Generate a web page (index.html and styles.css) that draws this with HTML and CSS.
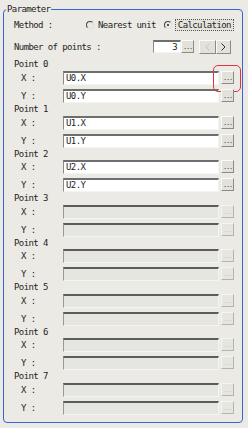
FILE: index.html
```html
<!DOCTYPE html>
<html lang="en">
<head>
  <meta charset="UTF-8" />
  <meta name="viewport" content="width=device-width, initial-scale=1.0"/>
  <title>Parameter</title>
  <link rel="stylesheet" href="styles.css">
</head>
<body>
  <fieldset class="panel">
    <legend>Parameter</legend>

    <!-- Method -->
    <div class="row method">
      <span class="label">Method :</span>
      <span class="radio"><span class="dot"></span>Nearest unit</span>
      <span class="radio on"><span class="dot"></span><span class="focus">Calculation</span></span>
    </div>

    <!-- Number of points -->
    <div class="row count">
      <span class="label">Number of points :</span>
      <span class="field num">3</span><span class="btn dots">...</span>
      <span class="btn arrow prev off">
        <svg width="5" height="8" viewBox="0 0 5 8"><path d="M4.5 0.5 L1 4 L4.5 7.5" fill="none" stroke="#c4c4bc" stroke-width="1"/></svg>
      </span><span class="btn arrow next">
        <svg width="5" height="8" viewBox="0 0 5 8"><path d="M0.5 0.5 L4 4 L0.5 7.5" fill="none" stroke="#333" stroke-width="1"/></svg>
      </span>
    </div>

    <!-- Point 0 -->
    <div class="point first">
      <div class="head">Point 0</div>
      <div class="row coord">
        <span class="axis">X :</span><span class="field">U0.X</span>
        <span class="btn dots">...<span class="mark"></span></span>
      </div>
      <div class="row coord">
        <span class="axis">Y :</span><span class="field">U0.Y</span><span class="btn dots">...</span>
      </div>
    </div>

    <!-- Point 1 -->
    <div class="point">
      <div class="head">Point 1</div>
      <div class="row coord">
        <span class="axis">X :</span><span class="field">U1.X</span><span class="btn dots">...</span>
      </div>
      <div class="row coord">
        <span class="axis">Y :</span><span class="field">U1.Y</span><span class="btn dots">...</span>
      </div>
    </div>

    <!-- Point 2 -->
    <div class="point tight">
      <div class="head">Point 2</div>
      <div class="row coord">
        <span class="axis">X :</span><span class="field">U2.X</span><span class="btn dots">...</span>
      </div>
      <div class="row coord">
        <span class="axis">Y :</span><span class="field">U2.Y</span><span class="btn dots">...</span>
      </div>
    </div>

    <!-- Point 3 - 7 (not used) -->
    <div class="point off">
      <div class="head">Point 3</div>
      <div class="row coord"><span class="axis">X :</span><span class="field"></span><span class="btn dots">...</span></div>
      <div class="row coord"><span class="axis">Y :</span><span class="field"></span><span class="btn dots">...</span></div>
    </div>
    <div class="point off tight">
      <div class="head">Point 4</div>
      <div class="row coord"><span class="axis">X :</span><span class="field"></span><span class="btn dots">...</span></div>
      <div class="row coord"><span class="axis">Y :</span><span class="field"></span><span class="btn dots">...</span></div>
    </div>
    <div class="point off">
      <div class="head">Point 5</div>
      <div class="row coord"><span class="axis">X :</span><span class="field"></span><span class="btn dots">...</span></div>
      <div class="row coord"><span class="axis">Y :</span><span class="field"></span><span class="btn dots">...</span></div>
    </div>
    <div class="point off tight">
      <div class="head">Point 6</div>
      <div class="row coord"><span class="axis">X :</span><span class="field"></span><span class="btn dots">...</span></div>
      <div class="row coord"><span class="axis">Y :</span><span class="field"></span><span class="btn dots">...</span></div>
    </div>
    <div class="point off">
      <div class="head">Point 7</div>
      <div class="row coord"><span class="axis">X :</span><span class="field"></span><span class="btn dots">...</span></div>
      <div class="row coord"><span class="axis">Y :</span><span class="field"></span><span class="btn dots">...</span></div>
    </div>
  </fieldset>
</body>
</html>
```

FILE: styles.css
```css
body {
  margin: 0;
  width: 248px;
  height: 428px;
  overflow: hidden;
  background-color: #ebeae4;
  font-family: "DejaVu Sans Mono", "Liberation Mono", monospace;
  font-size: 9px;
  letter-spacing: -0.6px;
  color: #1e1e1e;
}
.panel {
  margin: 3px 5px 0 3px;
  padding: 0 8px 7px 10px;
  border: 1px solid #3a63d8;
  border-radius: 4px;
  min-width: 0;
}
legend {
  margin-left: -8px;
  padding: 0 1px;
  line-height: 12px;
}
.row {
  display: flex;
  align-items: center;
}
.method {
  height: 14px;
  margin-top: 3px;
}
.method .label {
  width: 72px;
}
.radio {
  display: flex;
  align-items: center;
  white-space: pre;
}
.radio .dot {
  position: relative;
  width: 6px;
  height: 6px;
  margin-right: 4px;
  border: 1px solid;
  border-color: #444 #e0e0da #e0e0da #444;
  border-radius: 50%;
}
.radio.on {
  margin-left: 8px;
}
.radio.on .dot {
  margin-right: 3px;
}
.radio.on .dot::after {
  content: "";
  position: absolute;
  left: 2px;
  top: 2px;
  width: 2px;
  height: 2px;
  background: #222;
  border-radius: 50%;
}
.focus {
  padding: 0 2px;
  line-height: 10px;
  border: 1px dotted #555;
  background: #e4e4dc;
}
.count {
  height: 15px;
  margin-top: 7px;
}
.count .label {
  width: 139px;
}
.field {
  height: 14px;
  box-sizing: border-box;
  padding-left: 2px;
  line-height: 11px;
  background: #fff;
  border-top: 2px solid #6e6e6e;
  border-left: 1px solid #8a8a8a;
  border-right: 1px solid #f4f4f0;
  border-bottom: 1px solid #f4f4f0;
  white-space: pre;
}
.field.num {
  width: 28px;
  height: 13px;
  padding: 0 3px 0 0;
  text-align: right;
}
.btn {
  position: relative;
  display: flex;
  align-items: center;
  justify-content: center;
  box-sizing: border-box;
  width: 13px;
  height: 13px;
  background: #e2e2da;
  border: 1px solid;
  border-color: #fafaf6 #8c8c86 #8c8c86 #fafaf6;
  color: #444;
}
.dots {
  align-items: flex-end;
  font-size: 7px;
  letter-spacing: -1.2px;
  line-height: 9px;
}
.arrow {
  height: 14px;
}
.arrow.prev {
  width: 17px;
  margin-left: 5px;
}
.arrow.next {
  width: 15px;
}
.point .head {
  height: 13px;
  line-height: 13px;
}
.point.tight .head {
  height: 12px;
  line-height: 12px;
}
.point.first {
  margin-top: 4px;
}
.coord {
  align-items: flex-start;
}
.coord + .coord {
  margin-top: 4px;
}
.axis {
  width: 42px;
  padding-left: 7px;
  line-height: 14px;
}
.coord .field {
  flex: 1;
}
.coord .btn {
  margin-left: 2px;
}
.point.off .field {
  background: #e6e6e0;
  border-top-color: #5c5c5c;
  border-left-color: #9a9a94;
}
.point.off .btn {
  background: #e6e6e0;
  border-color: #f4f4f0 #b4b4ae #b4b4ae #f4f4f0;
  color: #c8c8c0;
}
.mark {
  position: absolute;
  left: -9px;
  top: -7px;
  width: 28px;
  height: 27px;
  box-sizing: border-box;
  border: 1.5px solid #e6303e;
  border-radius: 5px;
}
```
